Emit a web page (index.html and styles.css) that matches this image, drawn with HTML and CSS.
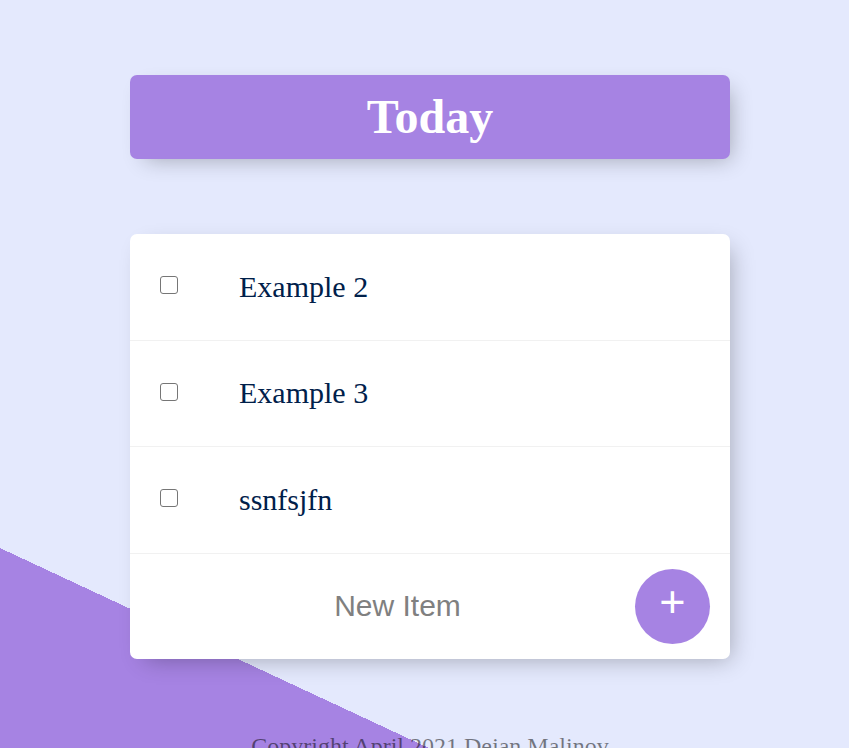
FILE: index.html
```html
<!DOCTYPE html>
<html lang="en">
<head>
<meta charset="utf-8">
<title>To-Do List</title>
<link rel="stylesheet" href="styles.css">
</head>
<body>
  <div class="box heading">
    <h1 class="title">Today</h1>
  </div>
  <div class="box list">
    <div class="item">
      <input class="check" type="checkbox">
      <p class="text">Example 2</p>
    </div>
    <div class="item">
      <input class="check" type="checkbox">
      <p class="text">Example 3</p>
    </div>
    <div class="item">
      <input class="check" type="checkbox">
      <p class="text">ssnfsjfn</p>
    </div>
    <form class="item new-form" onsubmit="return false">
      <input class="new-input" type="text" placeholder="New Item" autocomplete="off">
      <button class="add-btn" type="submit">+</button>
    </form>
  </div>
  <footer class="footer">Copyright April 2021 Dejan Malinov</footer>
</body>
</html>
```

FILE: styles.css
```css
html {
  background-color: #E4E9FD;
  background-image: linear-gradient(25deg, #A683E3 50%, #E4E9FD 50%);
  background-repeat: no-repeat;
  background-size: 849px 1492px;
  overflow: hidden;
  font-family: "Liberation Serif", "Times New Roman", serif;
}

body {
  margin: 0;
  padding: 0 12px 0 23px;
}

.box {
  width: 600px;
  margin: 75px auto;
  background: #fff;
  border-radius: 7px;
  box-shadow: 7.5px 7.5px 22.5px -7.5px rgba(0, 0, 0, 0.3);
}

.heading {
  margin-top: 74.5px;
  background-color: #A683E3;
  text-align: center;
}

.title {
  margin: 0;
  padding: 15px;
  font-size: 48px;
  line-height: 54.5px;
  font-weight: bold;
  color: #fff;
}

.item {
  min-height: 105.5px;
  display: flex;
  align-items: center;
  border-bottom: 1px solid #F1F1F1;
}

.item:last-child {
  border-bottom: 0;
}

.check {
  appearance: none;
  -webkit-appearance: none;
  box-sizing: border-box;
  width: 18px;
  height: 18px;
  margin: 0 31px 3px 30px;
  border: 1.5px solid #767676;
  border-radius: 3px;
  background: #fff;
  flex: none;
}

.text {
  margin: 0;
  padding: 30px;
  font-size: 30px;
  color: #00204a;
}

.new-form {
  padding-left: 65px;
  gap: 35px;
}

.new-input {
  box-sizing: border-box;
  width: 405px;
  height: 90px;
  padding: 15px;
  border: none;
  outline: none;
  text-align: center;
  font-family: "Liberation Sans", Arial, sans-serif;
  font-size: 30px;
  color: #333;
  background: transparent;
}

.new-input::placeholder {
  color: grey;
  opacity: 1;
}

.add-btn {
  width: 75px;
  height: 75px;
  border-radius: 50%;
  border: 0;
  background-color: #A683E3;
  color: #fff;
  font-family: "Liberation Sans", Arial, sans-serif;
  font-size: 45px;
  line-height: 1;
  padding: 0 0 9px 0;
  flex: none;
}

.footer {
  text-align: center;
  font-size: 24px;
  color: rgba(0, 0, 0, 0.5);
  margin-top: -1px;
}
```
